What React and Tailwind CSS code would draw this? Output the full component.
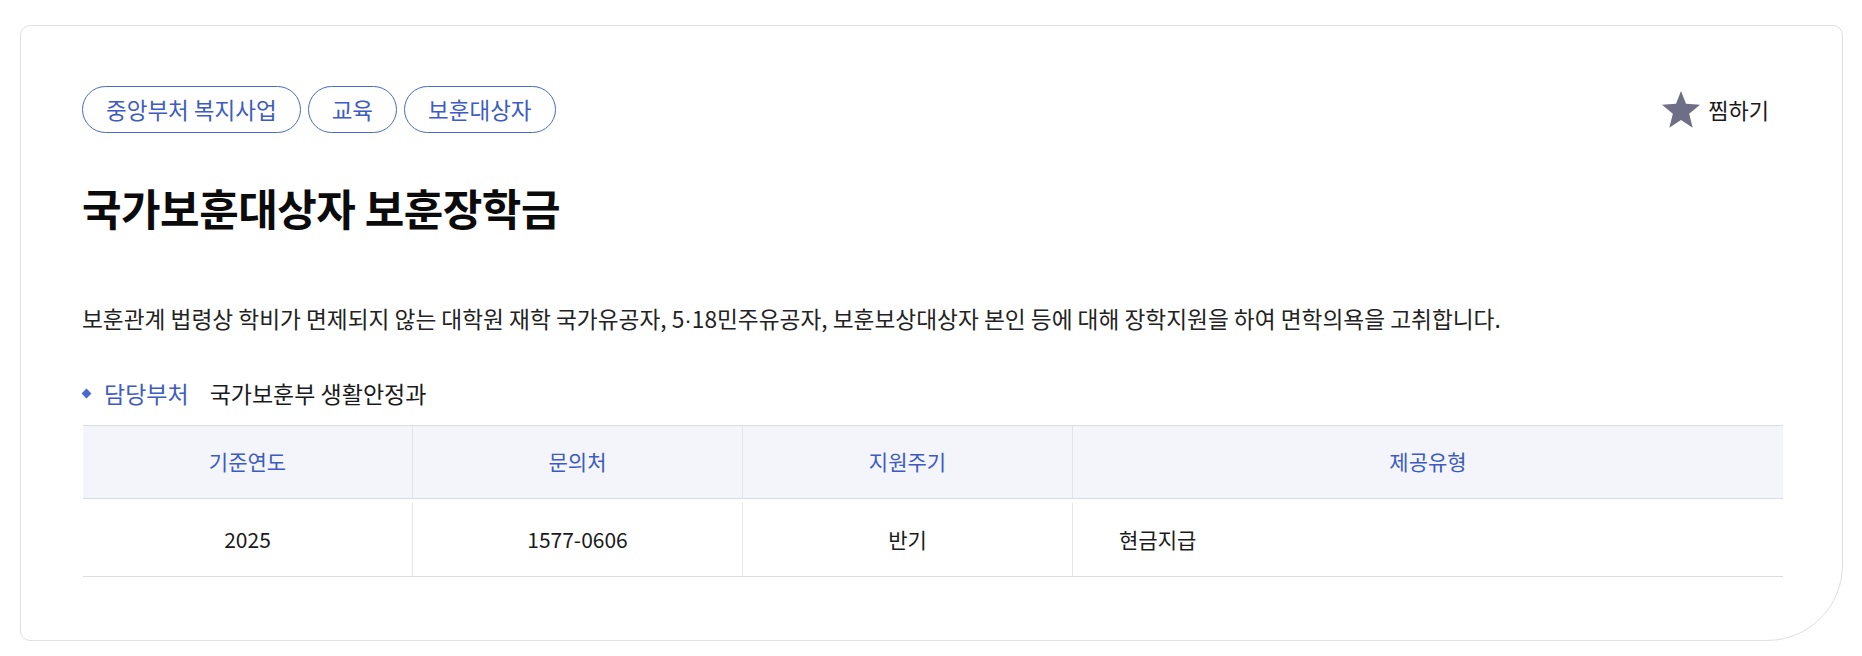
import React from "react";

const tags = ["중앙부처 복지사업", "교육", "보훈대상자"];

const columns = [
  { head: "기준연도", value: "2025", align: "center" },
  { head: "문의처", value: "1577-0606", align: "center" },
  { head: "지원주기", value: "반기", align: "center" },
  { head: "제공유형", value: "현금지급", align: "left" },
];

function StarIcon() {
  return (
    <svg width="40" height="40" viewBox="0 0 24 24" aria-hidden="true">
      <polygon
        points="12,0.6 15,8.3 23.4,8.8 16.9,14.2 19,22.6 12,18 5,22.6 7.1,14.2 0.6,8.8 9,8.3"
        fill="#6e6e86"
      />
    </svg>
  );
}

export default function App() {
  return (
    <div className="min-h-screen bg-white pt-[25px] font-['Noto_Sans_CJK_KR','Noto_Sans',sans-serif]">
      <section className="ml-[20px] w-[1823px] rounded-[10px] rounded-br-[76px] border border-[#dfdfdf] bg-white px-[61px] pt-[60px] pb-[63px]">
        {/* 태그 + 찜하기 */}
        <div className="flex items-center justify-between">
          <ul className="flex gap-[7px]">
            {tags.map((tag) => (
              <li
                key={tag}
                className="flex h-[47px] items-center rounded-full border border-[#4d69c5] px-[23px] text-[22.5px] text-[#3d5bc2]"
              >
                {tag}
              </li>
            ))}
          </ul>
          <button type="button" className="mr-[12px] flex items-center gap-[7px] text-[22px] text-[#1a1a1a]">
            <StarIcon />
            찜하기
          </button>
        </div>

        <h2 className="mt-[50px] text-[43px] font-bold leading-[48px] tracking-[-0.5px] text-[#0b0b0b]">
          국가보훈대상자 보훈장학금
        </h2>

        <p className="mt-[73px] text-[22.7px] leading-[30px] text-[#222]">
          보훈관계 법령상 학비가 면제되지 않는 대학원 재학 국가유공자, 5
          <span className="font-['Liberation_Sans',sans-serif]">·</span>
          18민주유공자, 보훈보상대상자 본인 등에 대해 장학지원을 하여 면학의욕을 고취합니다.
        </p>

        <div className="mt-[43px] flex items-center text-[23px] leading-[30px]">
          <span className="ml-[1px] h-[7px] w-[7px] rotate-45 bg-[#4a68cf]" />
          <span className="ml-[14px] text-[#3d5bc2]">담당부처</span>
          <span className="ml-[21px] text-[#1a1a1a]">국가보훈부 생활안정과</span>
        </div>

        {/* 표 */}
        <div className="mt-[17px] ml-[1px] w-[1700px]">
          <div className="grid h-[74px] grid-cols-[329px_330px_330px_1fr] border-y border-[#dcdde3] bg-[#f4f5fa]">
            {columns.map((c, i) => (
              <div
                key={c.head}
                className={`flex items-center justify-center text-[21px] text-[#3d5bc2] ${i > 0 ? "border-l border-[#e3e4ea]" : ""}`}
              >
                {c.head}
              </div>
            ))}
          </div>
          <div className="grid grid-cols-[329px_330px_330px_1fr] border-b border-[#dcdde3] pt-[4px]">
            {columns.map((c, i) => (
              <div
                key={c.head}
                className={`flex h-[73px] items-center text-[21px] text-[#1a1a1a] ${c.align === "left" ? "justify-start pl-[46px]" : "justify-center"} ${i > 0 ? "border-l border-[#e6e6ea]" : ""}`}
              >
                {c.value}
              </div>
            ))}
          </div>
        </div>
      </section>
    </div>
  );
}
